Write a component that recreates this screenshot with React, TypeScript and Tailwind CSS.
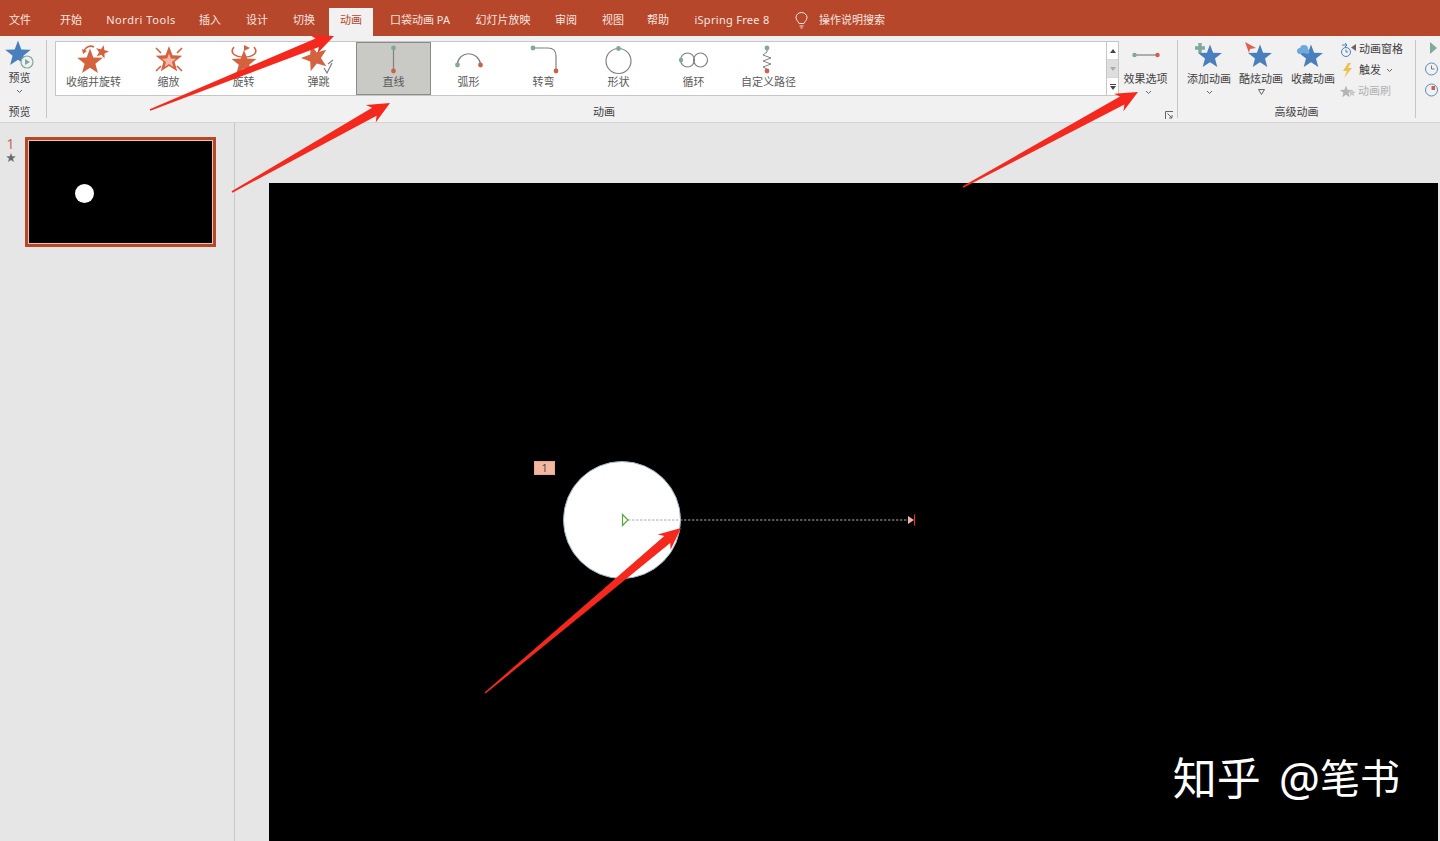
import type { ReactNode } from 'react';

const tabs = [
  { label: '开始', cls: 'w-[52px]' },
  { label: 'Nordri Tools', cls: 'w-[88px] tracking-[0.55px]' },
  { label: '插入', cls: 'w-[50px]' },
  { label: '设计', cls: 'w-[44px]' },
  { label: '切换', cls: 'w-[50px]' },
];

const tabsAfter = [
  { label: '口袋动画 PA', cls: 'w-[94px]' },
  { label: '幻灯片放映', cls: 'w-[72px]' },
  { label: '审阅', cls: 'w-[54px]' },
  { label: '视图', cls: 'w-[40px]' },
  { label: '帮助', cls: 'w-[50px]' },
  { label: 'iSpring Free 8', cls: 'w-[98px] tracking-[0.3px]' },
];

const ORANGE = '#d5623f';
const BLUE = '#4a7fbd';
const GREEN = '#7fa99a';
const RED = '#cf6048';
const GRAY = '#808080';

function star(cx: number, cy: number, r: number, rot = 0) {
  const pts: string[] = [];
  for (let i = 0; i < 10; i++) {
    const rad = i % 2 === 0 ? r : r * 0.42;
    const a = ((-90 + rot + i * 36) * Math.PI) / 180;
    pts.push(`${(cx + rad * Math.cos(a)).toFixed(1)},${(cy + rad * Math.sin(a)).toFixed(1)}`);
  }
  return pts.join(' ');
}

function arrowPoints(x1: number, y1: number, x2: number, y2: number) {
  const len = Math.hypot(x2 - x1, y2 - y1);
  const dx = (x2 - x1) / len;
  const dy = (y2 - y1) / len;
  const nx = -dy;
  const ny = dx;
  const at = (back: number, side: number) =>
    `${(x2 - dx * back + nx * side).toFixed(1)},${(y2 - dy * back + ny * side).toFixed(1)}`;
  const tail = (side: number) => `${(x1 + nx * side).toFixed(1)},${(y1 + ny * side).toFixed(1)}`;
  return [tail(0.8), at(18, 4.6), at(22, 10), `${x2},${y2}`, at(22, -10), at(18, -4.6), tail(-0.8)].join(' ');
}

function Icon({ children }: { children: ReactNode }) {
  return (
    <svg width="40" height="32" viewBox="0 0 40 32" className="overflow-visible">
      {children}
    </svg>
  );
}

const galleryItems: { label: string; icon: ReactNode; selected?: boolean }[] = [
  {
    label: '收缩并旋转',
    icon: (
      <Icon>
        <polygon points={star(16, 18, 13.5)} fill={ORANGE} />
        <polygon points={star(28, 8, 7, 15)} fill={ORANGE} />
        <path d="M10 7 A7 7 0 0 1 20 3" fill="none" stroke={ORANGE} strokeWidth="1.6" />
        <polygon points="8,5 13,7 9,10" fill={ORANGE} />
      </Icon>
    ),
  },
  {
    label: '缩放',
    icon: (
      <Icon>
        <polygon points={star(20, 16, 14)} fill={ORANGE} />
        <polygon points={star(20, 17, 7.5)} fill="#f2b9a6" />
        <path d="M7 4 L12 9 M33 4 L28 9 M7 27 L12 22 M33 27 L28 22" stroke={ORANGE} strokeWidth="1.6" />
      </Icon>
    ),
  },
  {
    label: '旋转',
    icon: (
      <Icon>
        <polygon points={star(20, 19, 13)} fill={ORANGE} />
        <path d="M10 3 C5 9 11 13 20 13 C29 13 35 9 30 3" fill="none" stroke={ORANGE} strokeWidth="1.5" />
        <polygon points="20,1 26,4 20,7" fill={ORANGE} />
      </Icon>
    ),
  },
  {
    label: '弹跳',
    icon: (
      <Icon>
        <polygon points={star(16, 14, 14, -18)} fill={ORANGE} />
        <path d="M25 24 L28 29 L33 19" fill="none" stroke={GRAY} strokeWidth="1.2" />
        <path d="M29 20 L34 16" fill="none" stroke={GRAY} strokeWidth="1.2" />
      </Icon>
    ),
  },
  {
    label: '直线',
    selected: true,
    icon: (
      <Icon>
        <line x1="19.5" y1="4" x2="19.5" y2="27" stroke={GRAY} strokeWidth="1.2" />
        <circle cx="19.5" cy="4" r="2.4" fill={GREEN} />
        <circle cx="19.5" cy="27" r="2.4" fill={RED} />
      </Icon>
    ),
  },
  {
    label: '弧形',
    icon: (
      <Icon>
        <path d="M8 21 C10 6 29 6 32 21" fill="none" stroke={GRAY} strokeWidth="1.2" />
        <circle cx="8.5" cy="21" r="2.4" fill={GREEN} />
        <circle cx="31.5" cy="21" r="2.4" fill={RED} />
      </Icon>
    ),
  },
  {
    label: '转弯',
    icon: (
      <Icon>
        <path d="M9 4 H24 Q32 4 32 12 V27" fill="none" stroke={GRAY} strokeWidth="1.2" />
        <circle cx="9" cy="4" r="2.4" fill={GREEN} />
        <circle cx="32" cy="27" r="2.4" fill={RED} />
      </Icon>
    ),
  },
  {
    label: '形状',
    icon: (
      <Icon>
        <circle cx="19.5" cy="17" r="12.5" fill="none" stroke={GRAY} strokeWidth="1.2" />
        <circle cx="19.5" cy="4.5" r="2.4" fill={GREEN} />
      </Icon>
    ),
  },
  {
    label: '循环',
    icon: (
      <Icon>
        <circle cx="13.5" cy="16" r="7" fill="none" stroke={GRAY} strokeWidth="1.2" />
        <circle cx="26.5" cy="16" r="7" fill="none" stroke={GRAY} strokeWidth="1.2" />
        <circle cx="7" cy="16" r="2.2" fill={GREEN} />
      </Icon>
    ),
  },
  {
    label: '自定义路径',
    icon: (
      <Icon>
        <path d="M18 4 V8 L14 11 L22 14 L14 17 L22 20 L14 23 L18 25 V27" fill="none" stroke={GRAY} strokeWidth="1" />
        <circle cx="18" cy="4" r="2.4" fill={GREEN} />
        <circle cx="18" cy="27" r="2.4" fill={RED} />
      </Icon>
    ),
  },
];

function Chevron() {
  return (
    <svg width="7" height="5" viewBox="0 0 7 5">
      <path d="M1 1 L3.5 3.5 L6 1" fill="none" stroke="#666" strokeWidth="1" />
    </svg>
  );
}

function BigButton({ label, icon, caret }: { label: string; icon: ReactNode; caret: ReactNode }) {
  return (
    <div className="flex w-[52px] flex-col items-center pt-[3px]">
      <svg width="44" height="32" viewBox="0 0 44 32">
        {icon}
      </svg>
      <span className="h-[16px] leading-[16px] whitespace-nowrap">{label}</span>
      <div className="mt-[2px] flex h-[6px] items-center">{caret}</div>
    </div>
  );
}

export default function App() {
  return (
    <div className="relative flex h-[841px] w-[1440px] flex-col overflow-hidden bg-[#e6e6e6] font-['Noto_Sans','Noto_Sans_CJK_SC',sans-serif] text-[11px] text-[#3f3f3f]">
      {/* tab bar */}
      <div className="flex h-[36px] bg-[#b7472a] text-[11px] text-[#f6e6e0]">
        <div className="mr-[5px] flex w-[40px] items-center justify-center pt-[4px]">文件</div>
        {tabs.map((t) => (
          <div key={t.label} className={`flex items-center justify-center pt-[4px] whitespace-nowrap ${t.cls}`}>
            {t.label}
          </div>
        ))}
        <div className="mt-[8px] flex w-[44px] items-center justify-center bg-[#f1f1f1] pb-[4px] text-[#b7472a]">动画</div>
        {tabsAfter.map((t) => (
          <div key={t.label} className={`flex items-center justify-center pt-[4px] whitespace-nowrap ${t.cls}`}>
            {t.label}
          </div>
        ))}
        <div className="ml-[14px] flex items-center gap-[11px] pt-[4px]">
          <svg width="13" height="17" viewBox="0 0 13 17" fill="none" stroke="#f6e6e0" strokeWidth="1">
            <path d="M4 11.5 C3 9 1 8 1 5.5 A5.5 5 0 0 1 12 5.5 C12 8 10 9 9 11.5 Z" />
            <path d="M4.5 14 H8.5 M5.5 16 H7.5" />
          </svg>
          <span>操作说明搜索</span>
        </div>
      </div>

      {/* ribbon */}
      <div className="flex h-[87px] border-b border-[#d4d4d4] bg-[#f1f1f1]">
        <div className="flex w-[46px] flex-col items-center pr-[7px]">
          <div className="flex h-[68px] flex-col items-center pt-[4px]">
            <svg width="34" height="30" viewBox="0 0 34 30">
              <polygon points={star(15, 14, 13.5)} fill={BLUE} />
              <circle cx="24" cy="22" r="6" fill="#f1f1f1" stroke={GREEN} strokeWidth="1.2" />
              <polygon points="22,19 22,25 27,22" fill={GREEN} />
            </svg>
            <span className="h-[16px] leading-[16px]">预览</span>
            <div className="mt-[2px] flex h-[6px] items-center">
              <Chevron />
            </div>
          </div>
          <div className="flex h-[18px] items-center justify-center pb-[2px]">预览</div>
        </div>
        <div className="my-[4px] w-px bg-[#c6c6c6]" />

        <div className="relative flex w-[1130px] flex-col">
          <div className="flex h-[68px]">
            <div className="mt-[5px] ml-[8px] flex h-[55px] w-[1064px] border border-[#c6c6c6] bg-white">
              <div className="flex flex-1">
                {galleryItems.map((item) => (
                  <div
                    key={item.label}
                    className={
                      item.selected
                        ? 'flex w-[75px] flex-col items-center border border-[#8a8a8a] bg-[#c9c9c6] pt-[1px]'
                        : 'flex w-[75px] flex-col items-center pt-[2px]'
                    }
                  >
                    {item.icon}
                    <span className="leading-[12px] whitespace-nowrap text-[#5a5a5a]">{item.label}</span>
                  </div>
                ))}
              </div>
              <div className="flex w-[12px] flex-col border-l border-[#c6c6c6] text-[#444444]">
                <div className="flex flex-1 items-center justify-center">
                  <svg width="6" height="4" viewBox="0 0 6 4"><polygon points="3,0 6,4 0,4" fill="#444" /></svg>
                </div>
                <div className="flex flex-1 items-center justify-center border-y border-[#d8d8d8] bg-[#dedede]">
                  <svg width="6" height="4" viewBox="0 0 6 4"><polygon points="0,0 6,0 3,4" fill="#aaa" /></svg>
                </div>
                <div className="flex flex-1 flex-col items-center justify-center gap-[1px]">
                  <div className="h-px w-[6px] bg-[#444444]" />
                  <svg width="6" height="4" viewBox="0 0 6 4"><polygon points="0,0 6,0 3,4" fill="#444" /></svg>
                </div>
              </div>
            </div>
            <div className="flex w-[53px] flex-col items-center pt-[9px]">
              <svg width="30" height="20" viewBox="0 0 30 20">
                <line x1="3" y1="10" x2="27" y2="10" stroke={GRAY} strokeWidth="1.2" />
                <circle cx="3.5" cy="10" r="2.2" fill={GREEN} />
                <circle cx="26.5" cy="10" r="2.2" fill={RED} />
              </svg>
              <span className="mt-[6px] h-[16px] leading-[16px] whitespace-nowrap">效果选项</span>
              <div className="mt-[2px] ml-[5px] flex h-[6px] items-center">
                <Chevron />
              </div>
            </div>
          </div>
          <div className="flex h-[18px] items-center justify-center pr-[16px] pb-[2px]">动画</div>
          <svg className="absolute right-[4px] bottom-[3px]" width="8" height="8" viewBox="0 0 8 8" fill="none" stroke="#666">
            <path d="M0.5 8 V0.5 H8" />
            <path d="M2.5 2.5 L7 7 M7 4 V7 H4" />
          </svg>
        </div>
        <div className="my-[4px] w-px bg-[#c6c6c6]" />

        <div className="flex w-[237px] flex-col">
          <div className="flex h-[68px] pl-[5px]">
            <BigButton
              label="添加动画"
              caret={<Chevron />}
              icon={
                <>
                  <polygon points={star(23, 18, 12.5)} fill={BLUE} />
                  <path d="M13 4 V14 M8 9 H18" stroke={GREEN} strokeWidth="3.4" />
                </>
              }
            />
            <BigButton
              label="酷炫动画"
              caret={
                <svg width="7" height="6" viewBox="0 0 7 6">
                  <path d="M0.5 0.5 H6.5 L3.5 5.5 Z" fill="none" stroke="#666" />
                </svg>
              }
              icon={
                <>
                  <polygon points={star(21, 18, 12.5)} fill={BLUE} />
                  <polygon points="6,3 17,9 11,10 10,14" fill="#e0604c" />
                </>
              }
            />
            <BigButton
              label="收藏动画"
              caret={null}
              icon={
                <>
                  <polygon points={star(20, 18, 12.5)} fill={BLUE} />
                  <circle cx="9" cy="12" r="3" fill="#6fa8dc" />
                  <circle cx="13" cy="10" r="4" fill="#6fa8dc" />
                  <circle cx="16" cy="12.5" r="2.5" fill="#6fa8dc" />
                </>
              }
            />
            <div className="flex flex-col pt-[3px] pl-[1px]">
              <div className="flex h-[21px] items-center gap-[2px] whitespace-nowrap">
                <svg width="17" height="16" viewBox="0 0 17 16" fill="none" stroke="#4a7fbd" strokeWidth="1">
                  <circle cx="6" cy="10" r="4.5" />
                  <path d="M6 7.5 V10 H8 M2 3 H6 M5 1 L7 3 L5 5" />
                  <polygon points="16,2 16,9 11,5.5" fill="#666" stroke="none" />
                </svg>
                动画窗格
              </div>
              <div className="flex h-[21px] items-center whitespace-nowrap">
                <svg className="mr-[7px] ml-[3px]" width="9" height="15" viewBox="0 0 9 15">
                  <polygon points="5,0 0,8 4,8 1,15 9,5 5,5 8,0" fill="#efc04c" />
                </svg>
                触发
                <span className="ml-[5px]">
                  <Chevron />
                </span>
              </div>
              <div className="flex h-[21px] items-center whitespace-nowrap text-[#b0b0b0]">
                <svg className="mr-[2px]" width="16" height="13" viewBox="0 0 16 13">
                  <polygon points={star(6, 7, 6.5)} fill="#b5b5b5" />
                  <polygon points={star(12, 8, 4)} fill="#c8c8c8" />
                </svg>
                动画刷
              </div>
            </div>
          </div>
          <div className="flex h-[18px] items-center justify-center pb-[2px]">高级动画</div>
        </div>
        <div className="my-[4px] w-px bg-[#c6c6c6]" />

        <div className="flex flex-1 flex-col items-end gap-[7px] pt-[5px] pr-[2px]">
          <svg width="14" height="14" viewBox="0 0 14 14">
            <polygon points="6,1 6,13 13,7" fill={GREEN} />
          </svg>
          <svg width="14" height="14" viewBox="0 0 14 14" fill="none" stroke="#5b8bc0">
            <circle cx="7.5" cy="7" r="6" />
            <path d="M7.5 3.5 V7 H10.5" stroke="#777" />
          </svg>
          <svg width="14" height="14" viewBox="0 0 14 14" fill="none" stroke="#5b8bc0">
            <circle cx="7.5" cy="7" r="6" />
            <path d="M7.5 7 V3 H11 V7 Z" fill={RED} stroke="none" />
          </svg>
        </div>
      </div>

      {/* workspace */}
      <div className="flex min-h-0 flex-1">
        <div className="flex w-[235px] shrink-0 border-r border-[#c8c8c8] pt-[14px]">
          <div className="mr-[4px] flex w-[21px] flex-col items-center">
            <span className="text-[14px] leading-[14px] text-[#c96a50]">1</span>
            <svg className="mt-[2px]" width="10" height="10" viewBox="0 0 10 10">
              <polygon points={star(5, 5, 5)} fill="#6b6b6b" />
            </svg>
          </div>
          <div className="h-[110px] w-[191px] border-[3px] border-[#b7472a]">
            <div className="flex h-full w-full items-center border border-[#f0c0a8] bg-black pt-[3px] pl-[46px]">
              <div className="h-[19px] w-[19px] rounded-full bg-white" />
            </div>
          </div>
        </div>
        <div className="flex flex-1 pt-[60px] pr-[2px] pl-[34px]">
          <div className="relative flex-1 bg-black">
            <div className="absolute top-[278px] left-[265px] flex h-[14px] w-[21px] items-center justify-center border border-[#e8a890] bg-[#f4b79f] text-[10px] leading-none text-[#444444]">
              1
            </div>
            <div className="absolute top-[278px] left-[294px] h-[118px] w-[118px] rounded-full border border-[#9db4c8] bg-white" />
            <svg className="absolute top-[327px] left-[350px]" width="300" height="20" viewBox="0 0 300 20">
              <line x1="9" y1="10" x2="290" y2="10" stroke="#a8a8a8" strokeWidth="1" strokeDasharray="2.5 1.5" />
              <polygon points="3.5,4.5 9,10 3.5,15.5" fill="none" stroke="#58a838" strokeWidth="1.2" />
              <polygon points="289,6 295,10 289,14" fill="#f3b3ac" />
              <line x1="295.5" y1="4.5" x2="295.5" y2="15.5" stroke="#e03030" strokeWidth="1.2" />
            </svg>
            <div className="absolute right-[38px] bottom-[39px] flex items-center leading-[48px] whitespace-nowrap text-white">
              <span className="text-[44px]">知乎</span>
              <span className="ml-[18px] text-[46px] leading-[48px]">@</span>
              <span className="text-[40px]">笔书</span>
            </div>
          </div>
        </div>
      </div>

      {/* red annotation arrows */}
      <svg className="absolute top-0 left-0" width="1440" height="841" viewBox="0 0 1440 841">
        <polygon points={arrowPoints(150, 110, 334, 36)} fill="#f5281e" />
        <polygon points={arrowPoints(232, 192, 390, 103)} fill="#f5281e" />
        <polygon points={arrowPoints(963, 187, 1138, 92)} fill="#f5281e" />
        <polygon points={arrowPoints(485, 693, 681, 528)} fill="#f5281e" />
      </svg>
    </div>
  );
}
